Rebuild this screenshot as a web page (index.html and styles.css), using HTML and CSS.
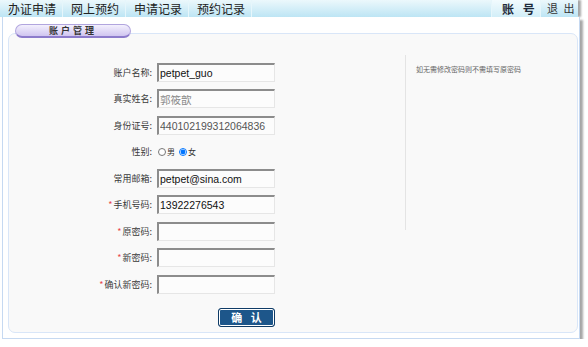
FILE: index.html
```html
<!DOCTYPE html>
<html lang="zh-CN">
<head>
    <meta charset="UTF-8">
    <title>账户管理</title>
    <link rel="stylesheet" href="styles.css">
</head>
<body>
    <div class="page">
        <div class="nav">
            <ul class="menu">
                <li>办证申请</li>
                <li>网上预约</li>
                <li>申请记录</li>
                <li>预约记录</li>
            </ul>
            <ul class="menu menu-right">
                <li class="current">账 号</li>
                <li class="logout">退 出</li>
            </ul>
        </div>
        <div class="frame">
            <div class="panel">
                <div class="panel-title">账户管理</div>
                <div class="panel-body">
                    <form class="account-form">
                        <div class="row">
                            <label>账户名称:</label>
                            <input type="text" value="petpet_guo">
                        </div>
                        <div class="row">
                            <label>真实姓名:</label>
                            <input type="text" class="disabled" value="郭筱歆">
                        </div>
                        <div class="row">
                            <label>身份证号:</label>
                            <input type="text" class="readonly" value="440102199312064836">
                        </div>
                        <div class="row">
                            <label>性别:</label>
                            <div class="gender">
                                <input type="radio" name="sex" id="male"><span>男</span>
                                <input type="radio" name="sex" id="female" checked><span>女</span>
                            </div>
                        </div>
                        <div class="row">
                            <label>常用邮箱:</label>
                            <input type="text" value="petpet@sina.com">
                        </div>
                        <div class="row">
                            <label><em>*</em>手机号码:</label>
                            <input type="text" value="13922276543">
                        </div>
                        <div class="row">
                            <label><em>*</em>原密码:</label>
                            <input type="password">
                        </div>
                        <div class="row">
                            <label><em>*</em>新密码:</label>
                            <input type="password">
                        </div>
                        <div class="row">
                            <label><em>*</em>确认新密码:</label>
                            <input type="password">
                        </div>
                        <div class="actions">
                            <button type="button">确 认</button>
                        </div>
                    </form>
                    <div class="tips">如无需修改密码则不需填写原密码</div>
                </div>
            </div>
        </div>
    </div>
</body>
</html>
```

FILE: styles.css
```css
body {
    margin: 0;
    background: #ffffff;
    font-family: "Noto Sans CJK SC", "Liberation Sans", sans-serif;
    color: #333;
}
.page {
    width: 580px;
}
.nav {
    width: 578px;
    height: 17px;
    display: flex;
    justify-content: space-between;
    background: linear-gradient(#ecf8fc, #bde5f4);
    box-shadow: 3px 0 2px rgba(0, 0, 0, 0.35);
}
.menu {
    list-style: none;
    margin: 0;
    padding: 0;
    display: flex;
}
.menu li {
    height: 17px;
    line-height: 17px;
    font-size: 12px;
    padding: 0 6px 0 8px;
    color: #222;
    white-space: nowrap;
    border-right: 1px solid #e6f6fb;
}
.menu-right li {
    border-right: none;
    border-left: 1px solid #e6f6fb;
}
.menu-right .current {
    width: 38px;
    padding: 0 0 0 10px;
    font-weight: bold;
    letter-spacing: 3px;
    background: linear-gradient(#f2fbfe, #d2eef8);
    color: #1d2a3a;
}
.menu-right .logout {
    padding: 0 2px 0 6px;
    font-size: 11px;
    letter-spacing: 1.5px;
    color: #333;
}
.frame {
    margin-left: 2px;
    width: 578px;
    height: 322px;
    box-sizing: border-box;
    border: 1px solid #c6d9f1;
    border-top: none;
    background: #ffffff;
    padding: 16px 1px 0 5px;
    box-shadow: 3px 3px 2px rgba(0, 0, 0, 0.35);
}
.panel {
    height: 300px;
    box-sizing: border-box;
    border: 1px solid #d9e6f8;
    border-radius: 7px;
    background: #f9f9f9;
}
.panel-title {
    width: 116px;
    height: 14px;
    box-sizing: border-box;
    margin: -10px 0 0 6px;
    border: 1px solid #b1a5de;
    border-bottom: 2px solid #8c7bcb;
    border-radius: 7px;
    background: linear-gradient(#f3f0fd, #d0c5f0);
    font-size: 9px;
    line-height: 11px;
    font-weight: bold;
    letter-spacing: 3px;
    text-align: center;
    color: #333;
}
.panel-body {
    display: flex;
}
.account-form {
    width: 396px;
    padding-top: 21px;
}
.row {
    height: 26.5px;
    display: grid;
    grid-template-columns: 143px 118px;
    column-gap: 5px;
    align-items: center;
}
.row label {
    text-align: right;
    font-size: 9px;
    color: #3a3a3a;
}
.row label em {
    font-style: normal;
    color: #e8474c;
    font-size: 9px;
    margin-right: 1px;
}
.row input[type="text"],
.row input[type="password"] {
    width: 118px;
    height: 19px;
    box-sizing: border-box;
    margin: 0;
    padding: 0 1px;
    border: 1px solid #e6e6e6;
    border-top: 2px solid #8c8c8c;
    border-left: 2px solid #8c8c8c;
    background: #fcfcfc;
    font-family: "Liberation Sans", "Noto Sans CJK SC", sans-serif;
    font-size: 10.5px;
    color: #111;
}
.row input.disabled {
    color: #8a8a8a;
}
.row input.readonly {
    color: #555;
}
.gender {
    display: flex;
    align-items: center;
    font-size: 8px;
    color: #333;
}
.gender input {
    width: 8px;
    height: 8px;
    margin: 0 0 0 1px;
}
.gender span {
    margin: 0 3px 0 1px;
}
.actions {
    width: 266px;
    padding-top: 5.5px;
    text-align: right;
}
.actions button {
    width: 57px;
    height: 19px;
    padding: 0 0 0 3px;
    border: 1px solid #0f3b66;
    border-radius: 3px;
    box-shadow: inset 0 0 0 1px #ffffff;
    background: #1d568a;
    color: #ffffff;
    font-family: "Noto Sans CJK SC", sans-serif;
    font-size: 11px;
    font-weight: bold;
    letter-spacing: 3px;
    line-height: 17px;
}
.tips {
    margin-top: 17px;
    height: 165px;
    border-left: 1px solid #e4e4e4;
    padding: 10px 0 0 10px;
    font-size: 7px;
    line-height: 8px;
    color: #666;
}
```
